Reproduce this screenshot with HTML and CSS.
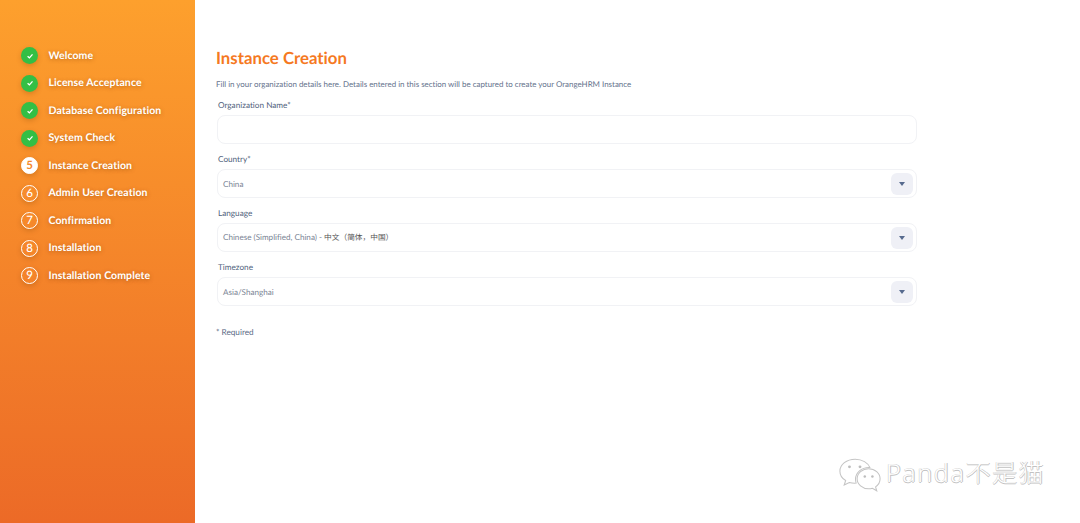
FILE: index.html
```html
<!DOCTYPE html>
<html lang="en">
<head>
<meta charset="utf-8">
<title>Instance Creation</title>
<link rel="stylesheet" href="styles.css">
</head>
<body>
<div class="page">
  <aside class="sidebar">
    <ol class="steps">
      <li class="step"><span class="dot done"><svg viewBox="0 0 10 10" class="check"><path d="M2.6 5.2 4.4 6.9 7.5 3.4"/></svg></span><span class="step-label">Welcome</span></li>
      <li class="step"><span class="dot done"><svg viewBox="0 0 10 10" class="check"><path d="M2.6 5.2 4.4 6.9 7.5 3.4"/></svg></span><span class="step-label">License Acceptance</span></li>
      <li class="step"><span class="dot done"><svg viewBox="0 0 10 10" class="check"><path d="M2.6 5.2 4.4 6.9 7.5 3.4"/></svg></span><span class="step-label">Database Configuration</span></li>
      <li class="step"><span class="dot done"><svg viewBox="0 0 10 10" class="check"><path d="M2.6 5.2 4.4 6.9 7.5 3.4"/></svg></span><span class="step-label">System Check</span></li>
      <li class="step"><span class="dot current">5</span><span class="step-label">Instance Creation</span></li>
      <li class="step"><span class="dot">6</span><span class="step-label">Admin User Creation</span></li>
      <li class="step"><span class="dot">7</span><span class="step-label">Confirmation</span></li>
      <li class="step"><span class="dot">8</span><span class="step-label">Installation</span></li>
      <li class="step"><span class="dot">9</span><span class="step-label">Installation Complete</span></li>
    </ol>
  </aside>
  <main class="content">
    <h1 class="title">Instance Creation</h1>
    <p class="intro">Fill in your organization details here. Details entered in this section will be captured to create your OrangeHRM Instance</p>
    <form class="form">
      <div class="field">
        <label class="label">Organization Name*</label>
        <div class="control"></div>
      </div>
      <div class="field">
        <label class="label">Country*</label>
        <div class="control"><span class="value">China</span><span class="caret-box"><span class="caret"></span></span></div>
      </div>
      <div class="field">
        <label class="label">Language</label>
        <div class="control"><span class="value">Chinese (Simplified, China) - <span class="cjk">中文（简体，中国）</span></span><span class="caret-box"><span class="caret"></span></span></div>
      </div>
      <div class="field">
        <label class="label">Timezone</label>
        <div class="control"><span class="value">Asia/Shanghai</span><span class="caret-box"><span class="caret"></span></span></div>
      </div>
    </form>
    <p class="required">* Required</p>
  </main>
  <div class="watermark">
    <svg class="wechat" viewBox="0 0 46 36">
      <path class="bubble" d="M18 2C9 2 2 7.500 2 14.500c0 4 2.300 7.500 6 9.800L6.500 29l5.300-2.700c1.800.5 3.700.8 5.700.8.500 0 1 0 1.500-.1-.5-1.300-.7-2.600-.7-4 0-6.800 6.300-12.300 14-12.300h1C31.500 6 25.300 2 18 2z"/>
      <path class="bubble" d="M44 22.500C44 16.700 38.500 12 32 12s-12 4.700-12 10.500S25.500 33 32 33c1.400 0 2.700-.2 4-.6L40.500 35l-1.200-4c2.900-2 4.700-5 4.700-8.500z"/>
      <circle class="eye" cx="12" cy="10" r="1.500"/><circle class="eye" cx="23" cy="10" r="1.500"/>
      <circle class="eye" cx="28" cy="20" r="1.300"/><circle class="eye" cx="36" cy="20" r="1.300"/>
    </svg>
    <span class="wm-text">Panda不是猫</span>
  </div>
</div>
</body>
</html>
```
FILE: styles.css
```css
* { box-sizing: border-box; }
html, body { margin: 0; padding: 0; height: 100%; background: #fff; }
body { font-family: "Lato", "Noto Sans CJK SC", sans-serif; overflow: hidden; text-rendering: geometricPrecision; font-variant-ligatures: none; }
.page { display: flex; height: 523px; position: relative; }
.sidebar {
  width: 195px; flex: none; padding-top: 47px; padding-left: 21px;
  background: linear-gradient(180deg, #fda02d 0%, #ec6a27 100%);
}
.steps { list-style: none; margin: 0; padding: 0; display: flex; flex-direction: column; gap: 10.5px; }
.step { display: flex; align-items: center; height: 17px; gap: 10.5px; }
.dot {
  width: 17px; height: 17px; border-radius: 50%; flex: none;
  display: flex; align-items: center; justify-content: center;
  border: 1.4px solid #fff; color: #fff; font-size: 11.500px; font-weight: 500;
  box-shadow: 0 2px 5px rgba(120,60,0,.25);
}
.dot.done { background: #33bf45; border: 0; }
.dot.current { background: #fff; color: #f5892b; font-weight: 700; }
.check { width: 10px; height: 10px; fill: none; stroke: #fff; stroke-width: 1.300; }
.step-label { color: #fff; font-size: 10.500px; line-height: 13px; padding-top: 1px; font-weight: 700; letter-spacing: .1px; text-shadow: 0 1px 4px rgba(120,60,0,.45); white-space: nowrap; }
.content { flex: 1; padding: 47px 0 0 21px; min-width: 0; }
.title { margin: 0; font-size: 16.800px; line-height: 22px; font-weight: 700; color: #f5791f; }
.intro { margin: 8px 0 0; font-size: 7.950px; line-height: 14px; color: #64728c; white-space: nowrap; }
.form { width: 701px; margin-top: 9px; display: flex; flex-direction: column; gap: 10px; }
.field { display: flex; flex-direction: column; gap: 4px; }
.label { font-size: 8.200px; line-height: 11px; color: #4f5f7c; padding-left: 2px; }
.control {
  height: 29px; margin-left: 1px; border: 1px solid #f1f2f5; border-radius: 8px;
  display: flex; align-items: center; justify-content: space-between;
  padding: 0 3px 0 5px; background: #fff;
}
.value { font-size: 8.100px; color: #7a8494; }
.cjk { color: #555; font-family: "Noto Sans CJK SC", sans-serif; font-size: 7.700px; }
.caret-box {
  width: 22px; height: 22px; border-radius: 6px; background: #eff0f6;
  display: flex; align-items: center; justify-content: center;
}
.caret { width: 0; height: 0; border-left: 3.500px solid transparent; border-right: 3.500px solid transparent; border-top: 4px solid #566a8e; }
.required { margin: 21px 0 0; font-size: 8.200px; line-height: 11px; color: #5a6a85; }
.watermark { position: absolute; left: 838px; top: 457px; display: flex; align-items: center; gap: 4px; }
.wechat { width: 44px; height: 35px; }
.bubble { fill: #fff; stroke: #c4c4c4; stroke-width: 1.100; }
.eye { fill: #bdbdbd; }
.wm-text {
  font-family: "Noto Sans", "Noto Sans CJK SC", sans-serif; font-size: 25px; font-weight: 300;
  letter-spacing: 1.600px; color: #fff; margin-top: -5px; white-space: nowrap;
  text-shadow: 1px 0 0 #c2c2c2, 0 1px 0 #c2c2c2, -.5px 0 0 #d5d5d5, 0 -.5px 0 #d5d5d5;
}
```
